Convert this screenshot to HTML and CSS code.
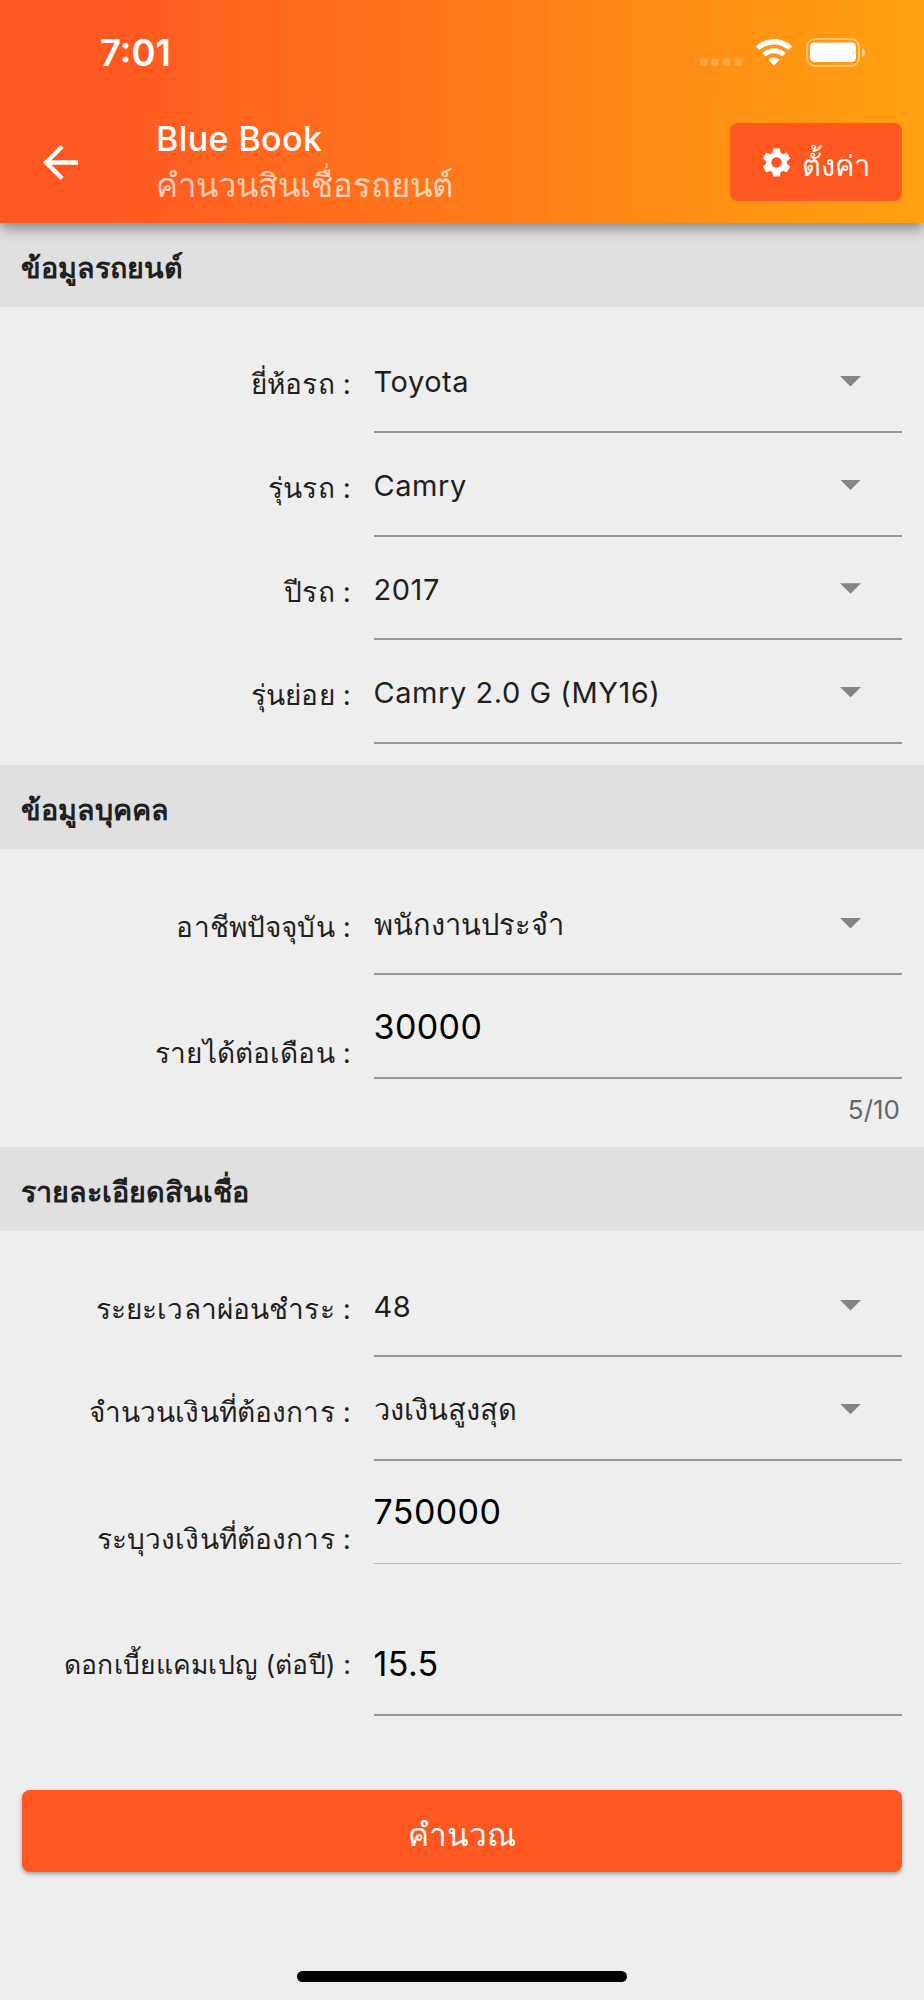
FILE: index.html
```
<!DOCTYPE html>
<html lang="th">
<head>
    <meta charset="UTF-8">
    <meta name="viewport" content="width=device-width, initial-scale=1.0">
    <title>Blue Book</title>
    <link rel="stylesheet" href="styles.css">
</head>
<body>
    <header class="header">
        <div class="status">
            <span class="time">7:01</span>
            <svg class="status-icons" viewBox="0 0 170 32" width="170" height="32">
                <g fill="#fff" fill-opacity=".2">
                    <rect x="0" y="20.500" width="7.500" height="7.500" rx="2.500"/>
                    <rect x="11.500" y="20.500" width="7.500" height="7.500" rx="2.500"/>
                    <rect x="23" y="20.500" width="7.500" height="7.500" rx="2.500"/>
                    <rect x="34.500" y="20.500" width="7.500" height="7.500" rx="2.500"/>
                </g>
                <path fill="#fff" d="M56 8.500C66-1.500 82-1.500 92 8.500L88.700 12C80.500 4.500 67.500 4.500 59.300 12ZM62.300 15C69 8.700 79 8.700 85.700 15L82.300 18.500C77.500 14 70.500 14 65.700 18.500ZM68.500 21.700C71.500 18.600 76.500 18.600 79.500 21.700L74 27.500Z"/>
                <rect x="107" y="1" width="52" height="27" rx="8" fill="none" stroke="#fff" stroke-opacity=".4" stroke-width="2"/>
                <rect x="110" y="4.500" width="46" height="19.500" rx="4.500" fill="#fff"/>
                <path d="M162 10Q165 11.500 165 14.500T162 19Z" fill="#fff" fill-opacity=".5"/>
            </svg>
        </div>
        <div class="toolbar">
            <svg class="back" viewBox="4 4 16 16" width="35" height="35"><path fill="#fff" d="M20 11H7.830l5.590-5.590L12 4l-8 8 8 8 1.410-1.410L7.830 13H20v-2z"/></svg>
            <div class="titles">
                <h1>Blue Book</h1>
                <p>คำนวนสินเชื่อรถยนต์</p>
            </div>
            <button class="settings">
                <svg viewBox="2 2 20 20" width="29" height="29"><path fill="#fff" d="M19.140 12.940c.04-.3.060-.61.060-.94 0-.32-.02-.64-.07-.94l2.030-1.580c.18-.14.230-.41.120-.61l-1.920-3.320c-.12-.22-.37-.29-.59-.22l-2.390.96c-.5-.38-1.030-.7-1.620-.94l-.36-2.540c-.04-.24-.24-.41-.48-.41h-3.840c-.24 0-.43.17-.47.41l-.36 2.540c-.59.24-1.130.57-1.620.94l-2.390-.96c-.22-.08-.47 0-.59.22L2.740 8.870c-.12.21-.08.47.12.61l2.030 1.580c-.05.3-.09.63-.09.94s.02.640.07.940l-2.030 1.580c-.18.140-.23.410-.12.610l1.920 3.320c.12.220.37.290.59.220l2.390-.96c.5.380 1.030.7 1.620.94l.36 2.540c.05.240.24.410.48.410h3.840c.24 0 .44-.17.47-.41l.36-2.540c.59-.24 1.130-.56 1.620-.94l2.390.96c.22.080.47 0 .59-.22l1.920-3.320c.12-.22.070-.47-.12-.61l-2.010-1.580zM12 15.600c-1.980 0-3.600-1.620-3.600-3.600s1.620-3.600 3.600-3.600 3.600 1.620 3.600 3.600-1.620 3.600-3.600 3.600z"/></svg>
                <span>ตั้งค่า</span>
            </button>
        </div>
    </header>

    <main>
        <h2>ข้อมูลรถยนต์</h2>
        <section>
            <div class="row">
                <label>ยี่ห้อรถ :</label>
                <div class="field select">Toyota</div>
            </div>
            <div class="row">
                <label>รุ่นรถ :</label>
                <div class="field select">Camry</div>
            </div>
            <div class="row">
                <label>ปีรถ :</label>
                <div class="field select">2017</div>
            </div>
            <div class="row">
                <label>รุ่นย่อย :</label>
                <div class="field select">Camry 2.0 G (MY16)</div>
            </div>
        </section>

        <h2>ข้อมูลบุคคล</h2>
        <section>
            <div class="row">
                <label>อาชีพปัจจุบัน :</label>
                <div class="field select thai">พนักงานประจำ</div>
            </div>
            <div class="row low">
                <label>รายได้ต่อเดือน :</label>
                <div class="field input">30000</div>
            </div>
            <p class="counter">5/10</p>
        </section>

        <h2>รายละเอียดสินเชื่อ</h2>
        <section>
            <div class="row">
                <label>ระยะเวลาผ่อนชำระ :</label>
                <div class="field select">48</div>
            </div>
            <div class="row">
                <label>จำนวนเงินที่ต้องการ :</label>
                <div class="field select thai">วงเงินสูงสุด</div>
            </div>
            <div class="row low">
                <label>ระบุวงเงินที่ต้องการ :</label>
                <div class="field input disabled">750000</div>
            </div>
            <div class="row rate">
                <label>ดอกเบี้ยแคมเปญ (ต่อปี) :</label>
                <div class="field input">15.5</div>
            </div>
        </section>

        <button class="submit">คำนวณ</button>
    </main>
    <div class="home-bar"></div>
</body>
</html>
```
FILE: styles.css
```
* {
    box-sizing: border-box;
}
body {
    margin: 0;
    height: 2000px;
    background: #eeeeee;
    color: #1f1f1f;
    font-family: Inter, "Noto Sans", sans-serif;
    overflow: hidden;
}
h1, h2, p {
    margin: 0;
}
button {
    border: none;
    color: #fff;
    background: #ff5722;
    font-family: inherit;
}
.header {
    position: relative;
    height: 222.500px;
    background: linear-gradient(90deg, #ff5722 10%, #ff7b19 52%, #ff9413 82%, #ffa010 100%);
    box-shadow: 0 6px 12px rgba(0, 0, 0, .38);
}
.status {
    display: flex;
    justify-content: space-between;
    height: 107px;
    padding: 30px 54px 0 100px;
}
.time {
    color: #fff;
    font-size: 36.500px;
    font-weight: 600;
    line-height: 46px;
}
.status-icons {
    margin-top: 8px;
}
.toolbar {
    display: flex;
    align-items: flex-start;
    padding: 0 22px 0 43px;
}
.back {
    margin-top: 38px;
}
.titles {
    flex: 1;
    margin-left: 78px;
    padding-top: 8px;
}
h1 {
    color: #fff;
    font-size: 34px;
    font-weight: 500;
    line-height: 47px;
    letter-spacing: 0.4px;
}
.titles p {
    color: rgba(255, 255, 255, .7);
    font-size: 32.800px;
    line-height: 47px;
}
.settings {
    display: flex;
    align-items: center;
    justify-content: center;
    gap: 11px;
    width: 172px;
    height: 78px;
    margin-top: 16px;
    border-radius: 8px;
    font-size: 29px;
    font-weight: 500;
}
.settings span {
    padding-top: 7px;
}
h2 {
    height: 84.200px;
    padding: 23px 21px 0;
    background: #e0e0e0;
    font-size: 28.700px;
    font-weight: 700;
    line-height: 44px;
}
section {
    padding: 22.700px 22px 20.600px 0;
}
.row {
    display: flex;
    height: 103.680px;
}
label {
    width: 351px;
    padding-top: 35px;
    text-align: right;
    font-size: 28px;
    line-height: 40px;
    letter-spacing: 0.150px;
    white-space: nowrap;
}
.field {
    flex: 1;
    margin-left: 22.500px;
    padding-top: 33px;
    border-bottom: 2px solid #989898;
    font-size: 29px;
    line-height: 40px;
    letter-spacing: 0.550px;
}
.select {
    display: flex;
    justify-content: space-between;
}
.select::after {
    content: "";
    width: 21px;
    height: 10.500px;
    margin: 13.500px 41px 0 0;
    background: #858585;
    clip-path: polygon(0 0, 100% 0, 50% 100%);
}
.thai {
    letter-spacing: 0.100px;
}
.low label {
    padding-top: 58px;
}
.input {
    padding-top: 31.500px;
    color: #000;
    font-size: 34px;
    letter-spacing: 0.400px;
}
.disabled {
    margin-bottom: 1px;
    border-bottom: 1px solid #bdbdbd;
}
.counter {
    height: 47.200px;
    padding: 11px 2px 0 0;
    text-align: right;
    color: #666;
    font-size: 26px;
    line-height: 40px;
}
.rate {
    margin-top: 48px;
}
.rate label {
    padding-top: 31px;
    font-size: 26.500px;
}
.submit {
    display: block;
    width: 880px;
    height: 82.500px;
    margin: 53px auto 0;
    padding-top: 9px;
    border-radius: 8px;
    box-shadow: 0 2px 4px rgba(0, 0, 0, .35);
    font-size: 31.500px;
    font-weight: 500;
}
.home-bar {
    width: 330px;
    height: 11px;
    margin: 99px auto 0;
    border-radius: 6px;
    background: #000;
}
```
